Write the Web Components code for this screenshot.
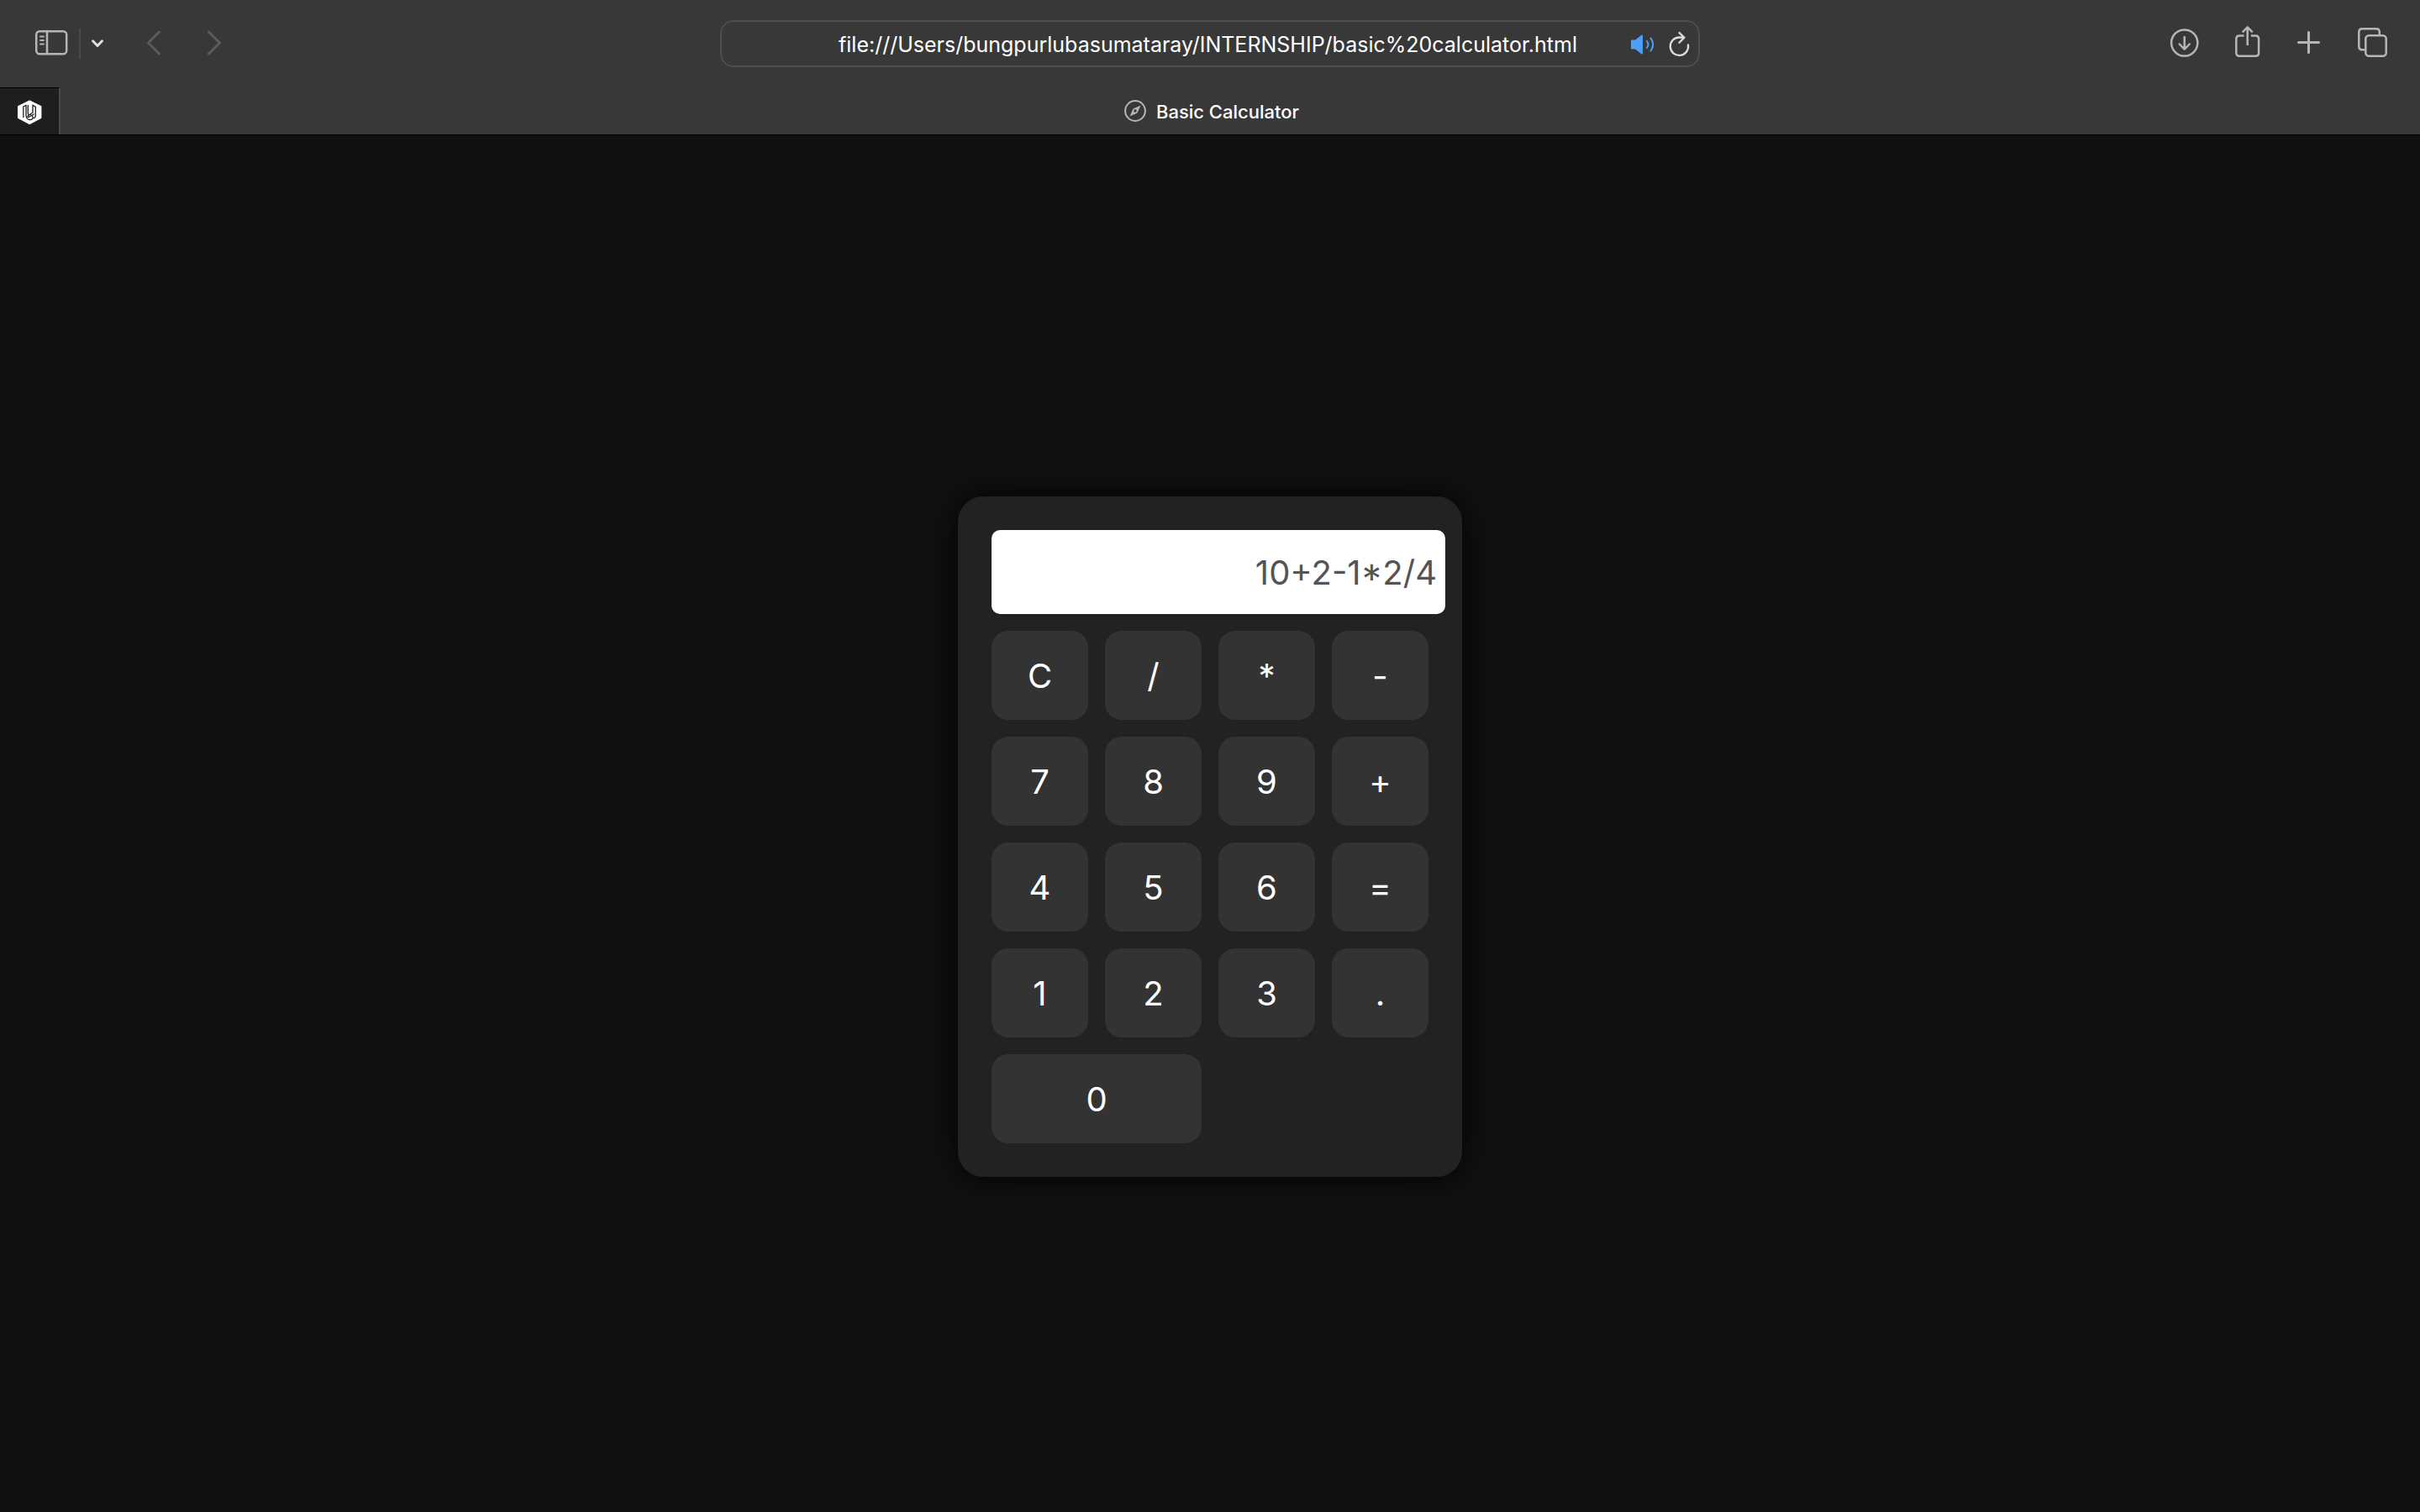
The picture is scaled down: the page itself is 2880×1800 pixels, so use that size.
<!DOCTYPE html>
<html lang="en">
<head>
<meta charset="utf-8">
<title>Basic Calculator</title>
<style>
  html, body { height: 100%; }
  body { margin: 0; background: #111; font-family: Inter, "Liberation Sans", sans-serif; }
</style>
</head>
<body>
<browser-window>
  <nav-toolbar slot="toolbar"></nav-toolbar>
  <tab-strip slot="tabs">Basic Calculator</tab-strip>
  <calc-panel></calc-panel>
</browser-window>

<script>
const define = (name, html, setup) => {
  const template = document.createElement('template');
  template.innerHTML = html;
  customElements.define(name, class extends HTMLElement {
    constructor() {
      super();
      this.attachShadow({ mode: 'open' }).append(template.content.cloneNode(true));
    }
    connectedCallback() { if (setup) setup(this); }
  });
};

define('browser-window', `
  <style>
    :host { display: flex; flex-direction: column; min-height: 100%; }
    header { background: #383838; border-bottom: 1px solid #000; }
    main { flex: 1; display: flex; align-items: center; justify-content: center; padding-top: 31px; }
  </style>
  <header><slot name="toolbar"></slot><slot name="tabs"></slot></header>
  <main><slot></slot></main>`);

define('tool-button', `
  <style>
    :host { display: block; }
    button { display: flex; border: 0; padding: 0; margin: 0; background: none; color: inherit; }
  </style>
  <button type="button"><slot></slot></button>`, el => {
    el.shadowRoot.querySelector('button').setAttribute('aria-label', el.getAttribute('label'));
  });

define('nav-toolbar', `
  <style>
    :host { display: grid; grid-template-columns: 1fr 1166px 1fr; align-items: center; height: 104px; color: #b6b6b6; }
    .side { display: flex; align-items: center; }
    .left { padding-left: 40px; }
    .right { justify-content: flex-end; gap: 32px; padding-right: 36px; }
    .rule { width: 2px; height: 36px; margin: 0 12px; background: #4a4a4a; }
    .history { display: flex; gap: 28px; margin-left: 34px; color: #5c5c5c; }
    .menu { color: #dedede; }
    svg { display: block; overflow: visible; fill: none; stroke: currentColor; stroke-width: 3; stroke-linecap: round; stroke-linejoin: round; }
    .fine { stroke-width: 2.5; }
  </style>
  <div class="side left">
    <tool-button label="Sidebar"><svg width="42" height="44"><rect x="3.200" y="7.200" width="36" height="27" rx="4" class="fine"/><path class="fine" d="M16 8v26"/><path stroke-width="2" style="stroke-width:1.800" d="M8 13.500h4M8 18h4M8 22.500h4"/></svg></tool-button>
    <div class="rule"></div>
    <tool-button class="menu" label="Tab groups"><svg width="16" height="44"><path d="M2.500 18.800l5.500 5.700 5.500-5.700"/></svg></tool-button>
    <div class="history">
      <tool-button label="Back"><svg width="44" height="44"><path d="M31.500 8L18.500 21 31.500 34"/></svg></tool-button>
      <tool-button label="Forward"><svg width="44" height="44"><path d="M18.500 8L31.500 21 18.500 34"/></svg></tool-button>
    </div>
  </div>
  <address-bar></address-bar>
  <div class="side right">
    <tool-button label="Downloads"><svg width="44" height="44"><circle class="fine" cx="27.700" cy="21" r="15.600"/><path class="fine" d="M27.700 14v14.500M21.700 22.500l6 6.200 6-6.200"/></svg></tool-button>
    <tool-button label="Share"><svg width="44" height="44"><path class="fine" stroke-linecap="butt" d="M22.500 12.500h-5.200q-4 0-4 4v16.200q0 4 4 4h18.800q4 0 4-4v-16.200q0-4-4-4h-5.200M26.700 24V3M20.700 8.300l6-6 6 6"/></svg></tool-button>
    <tool-button label="New tab"><svg width="44" height="44"><path d="M23.500 8.500v24M11.500 20.500h24"/></svg></tool-button>
    <tool-button label="Tab overview"><svg width="44" height="44"><path class="fine" d="M13.500 29.200h-2.200q-4 0-4-4v-17q0-4 4-4h16.500q4 0 4 4v2.500"/><rect class="fine" x="15.300" y="12.300" width="24.400" height="24.400" rx="4"/></svg></tool-button>
  </div>`);

define('address-bar', `
  <style>
    :host { display: flex; align-items: center; box-sizing: border-box; height: 56px; border: 2px solid #4e4e4e; border-radius: 16px; padding-right: 7px; gap: 10px; }
    input { flex: 1; min-width: 0; border: 0; padding: 2px 0 0 88px; background: none; outline: 0; color: #fff; font: 25px/32px Inter, "Liberation Sans", sans-serif; text-align: center; }
    svg { display: block; overflow: visible; fill: none; stroke: currentColor; stroke-width: 2; stroke-linecap: round; stroke-linejoin: round; }
    .audio { color: #4d9ff7; }
    .reload { color: #dedede; }
  </style>
  <input type="text" aria-label="Address" value="file:///Users/bungpurlubasumataray/INTERNSHIP/basic%20calculator.html">
  <tool-button class="audio" label="Mute tab"><svg width="34" height="32"><path fill="currentColor" d="M4 12.500h4.500L16 6.500v21L8.500 21.500H4z"/><path d="M22 13q3 4 0 8M26.500 9.500q5.500 7.500 0 15"/></svg></tool-button>
  <tool-button class="reload" label="Reload"><svg width="32" height="32"><path stroke-width="2.300" d="M27 17.500A10.700 10.700 0 1 1 16.500 8.500L22.500 8.800M16.500 3l6 5.800-6 6"/></svg></tool-button>`);

define('tab-strip', `
  <style>
    :host { display: flex; height: 56px; }
    a { color: inherit; text-decoration: none; display: flex; align-items: center; justify-content: center; }
    .pinned { box-sizing: border-box; width: 72px; background: #1e1e1e; border-top: 1px solid #000; border-right: 2px solid #4a4a4a; }
    .current { flex: 1; gap: 12px; color: #fff; font-size: 22px; font-weight: 500; line-height: 28px; padding-right: 68px; }
    svg { display: block; }
    span { padding-top: 1px; }
  </style>
  <a class="pinned" href="#pinned" aria-label="Pinned tab"><svg width="30" height="30" viewBox="0 0 30 30"><path fill="#fff" stroke="#fff" stroke-width="2" stroke-linejoin="round" d="M15.200 2.500l13.200 6.500v13L15.200 29 2 22v-13z"/><path fill="none" stroke="#1e1e1e" stroke-width="1.300" stroke-linejoin="round" stroke-linecap="round" d="M7.800 21.500V9l3.200-1.700v12.700q.7 4.500 4.500 4.500t3.700-3l-.8-1.500M13.300 7.500v9.500q.5 2.500 3.200 1.300M19 7v9l-5.500 3.700q-1.500 2 .7 1.800l6-3.500M19 7.300l3.300 1.700v11.500q-.2 1.800-2 2.200"/></svg></a>
  <a class="current" href="#current"><svg width="26" height="26" viewBox="0 0 26 26"><circle cx="13" cy="13" r="11.900" fill="none" stroke="#b6b6b6" stroke-width="2"/><path fill="#b6b6b6" fill-rule="evenodd" d="M19.500 6.500l-4 9L6.500 19.500l4-9zM13 11.300a1.700 1.700 0 1 0 0 3.400a1.700 1.700 0 1 0 0-3.400z"/></svg><span><slot></slot></span></a>`);

define('calc-key', `
  <style>
    :host { display: block; }
    :host([wide]) { grid-column: span 2; }
    button { display: block; width: 100%; border: 0; margin: 0; padding: 29px 0 27px; border-radius: 20px; background: #333; color: #fff; font: 40px/50px Inter, "Liberation Sans", sans-serif; text-align: center; }
  </style>
  <button type="button"><slot></slot></button>`);

define('calc-panel', `
  <style>
    :host { display: block; box-sizing: border-box; width: 600px; padding: 40px; border-radius: 30px; background: #222; box-shadow: 0 0 40px #000; }
    .keys { display: grid; grid-template-columns: repeat(4, minmax(0, 1fr)); gap: 20px; }
    input { grid-column: 1 / -1; box-sizing: border-box; width: 540px; height: 100px; border: 0; margin: 0; padding: 0 10px; border-radius: 10px; background: #fff; color: #545454; font: 40px/50px Inter, "Liberation Sans", sans-serif; text-align: right; opacity: 1; }
  </style>
  <div class="keys">
    <input type="text" aria-label="Result" value="10+2-1*2/4" disabled>
    <calc-key>C</calc-key><calc-key>/</calc-key><calc-key>*</calc-key><calc-key>-</calc-key>
    <calc-key>7</calc-key><calc-key>8</calc-key><calc-key>9</calc-key><calc-key>+</calc-key>
    <calc-key>4</calc-key><calc-key>5</calc-key><calc-key>6</calc-key><calc-key>=</calc-key>
    <calc-key>1</calc-key><calc-key>2</calc-key><calc-key>3</calc-key><calc-key>.</calc-key>
    <calc-key wide>0</calc-key>
  </div>`);
</script>
</body>
</html>
